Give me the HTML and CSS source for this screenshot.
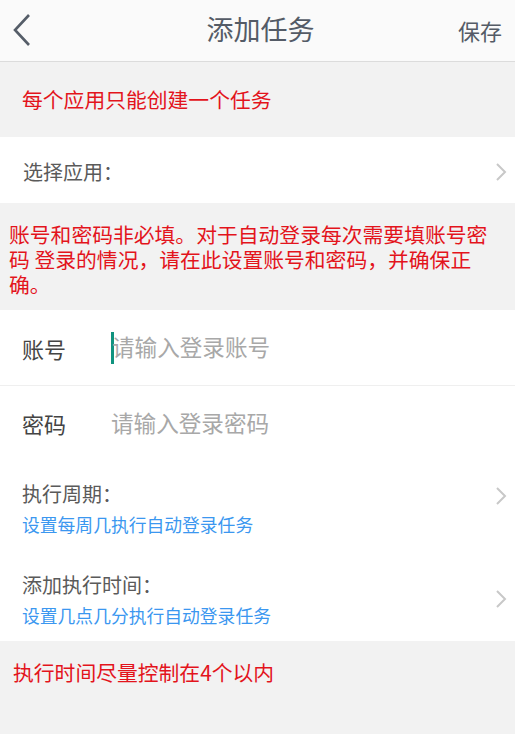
FILE: index.html
```html
<!DOCTYPE html>
<html lang="zh">
<head>
<meta charset="utf-8">
<link rel="stylesheet" href="styles.css">
</head>
<body>
<div class="page">
  <header class="topbar">
    <svg class="back" width="20" height="34" viewBox="0 0 20 34"><polyline points="16,2 2,17 16,32" fill="none" stroke="#555d68" stroke-width="2.6"/></svg>
    <div class="title">添加任务</div>
    <div class="save">保存</div>
  </header>
  <div class="notice n1">每个应用只能创建一个任务</div>
  <div class="row select">
    <span class="label">选择应用：</span>
    <svg class="chev" width="12" height="18" viewBox="0 0 12 18"><polyline points="2,1 10,9 2,17" fill="none" stroke="#c8c8c8" stroke-width="2"/></svg>
  </div>
  <div class="notice n2">账号和密码非必填。对于自动登录每次需要填账号密码 登录的情况，请在此设置账号和密码，并确保正确。</div>
  <div class="field first">
    <span class="flabel">账号</span>
    <span class="input"><span class="cursor"></span><span class="ph">请输入登录账号</span></span>
  </div>
  <div class="field">
    <span class="flabel">密码</span>
    <span class="input"><span class="ph">请输入登录密码</span></span>
  </div>
  <div class="row two">
    <div class="texts">
      <div class="label">执行周期：</div>
      <div class="sub">设置每周几执行自动登录任务</div>
    </div>
    <svg class="chev up" width="12" height="18" viewBox="0 0 12 18"><polyline points="2,1 10,9 2,17" fill="none" stroke="#c8c8c8" stroke-width="2"/></svg>
  </div>
  <div class="row two">
    <div class="texts">
      <div class="label">添加执行时间：</div>
      <div class="sub">设置几点几分执行自动登录任务</div>
    </div>
    <svg class="chev" width="12" height="18" viewBox="0 0 12 18"><polyline points="2,1 10,9 2,17" fill="none" stroke="#c8c8c8" stroke-width="2"/></svg>
  </div>
  <div class="notice n3">执行时间尽量控制在4个以内</div>
</div>
</body>
</html>
```
FILE: styles.css
```css
* { box-sizing: border-box; }
html, body { margin: 0; padding: 0; }
body {
  font-family: "Noto Sans CJK SC", "Noto Sans", sans-serif;
  background: #f2f2f2;
  width: 515px;
  height: 734px;
  overflow: hidden;
}
.page { display: flex; flex-direction: column; min-height: 734px; background: #f2f2f2; }
.topbar {
  height: 62px;
  background: #fafafa;
  border-bottom: 1px solid #dcdcdc;
  display: flex;
  align-items: center;
  justify-content: space-between;
  padding: 0 13px 0 13px;
}
.back { display: block; margin-top: -2px; }
.title { font-size: 27px; color: #545b66; line-height: 1; margin-left: 30px; margin-top: -4px; }
.save { font-size: 22px; color: #545b66; line-height: 1; margin-top: -2px; }
.notice { color: #e3141c; font-size: 20.8px; }
.n1 { height: 75px; padding-left: 22px; display: flex; align-items: center; padding-bottom: 1px; }
.n2 { padding: 19px 14px 12px 9px; line-height: 25px; height: 107px; }
.n3 { padding: 18px 0 0 13px; line-height: 26px; flex: 1; }
.row {
  background: #fff;
  display: flex;
  align-items: center;
  justify-content: space-between;
  padding: 0 8px 0 22px;
}
.select { height: 66px; padding-top: 3px; }
.select .label { padding-left: 1px; }
.label { font-size: 20px; color: #5a5a5a; line-height: 28px; }
.field {
  background: #fff;
  display: flex;
  align-items: center;
  height: 75px;
  padding-left: 22px;
}
.field.first { border-bottom: 1px solid #efefef; height: 76px; }
.field:not(.first) { height: 74px; }
.flabel { font-size: 22px; color: #444; width: 89px; line-height: 1; }
.input { display: flex; align-items: center; }
.cursor { width: 3px; height: 32px; background: #10937f; margin-right: -2px; }
.ph { font-size: 22.6px; color: #a8a8a8; line-height: 1; }
.two { height: 90px; padding-top: 5px; }
.two + .two { height: 91px; padding-top: 7px; }
.texts { display: flex; flex-direction: column; gap: 4px; }
.sub { font-size: 17.8px; color: #3b97f0; line-height: 24px; }
.chev { display: block; }
.chev.up { margin-bottom: 24px; }
```
